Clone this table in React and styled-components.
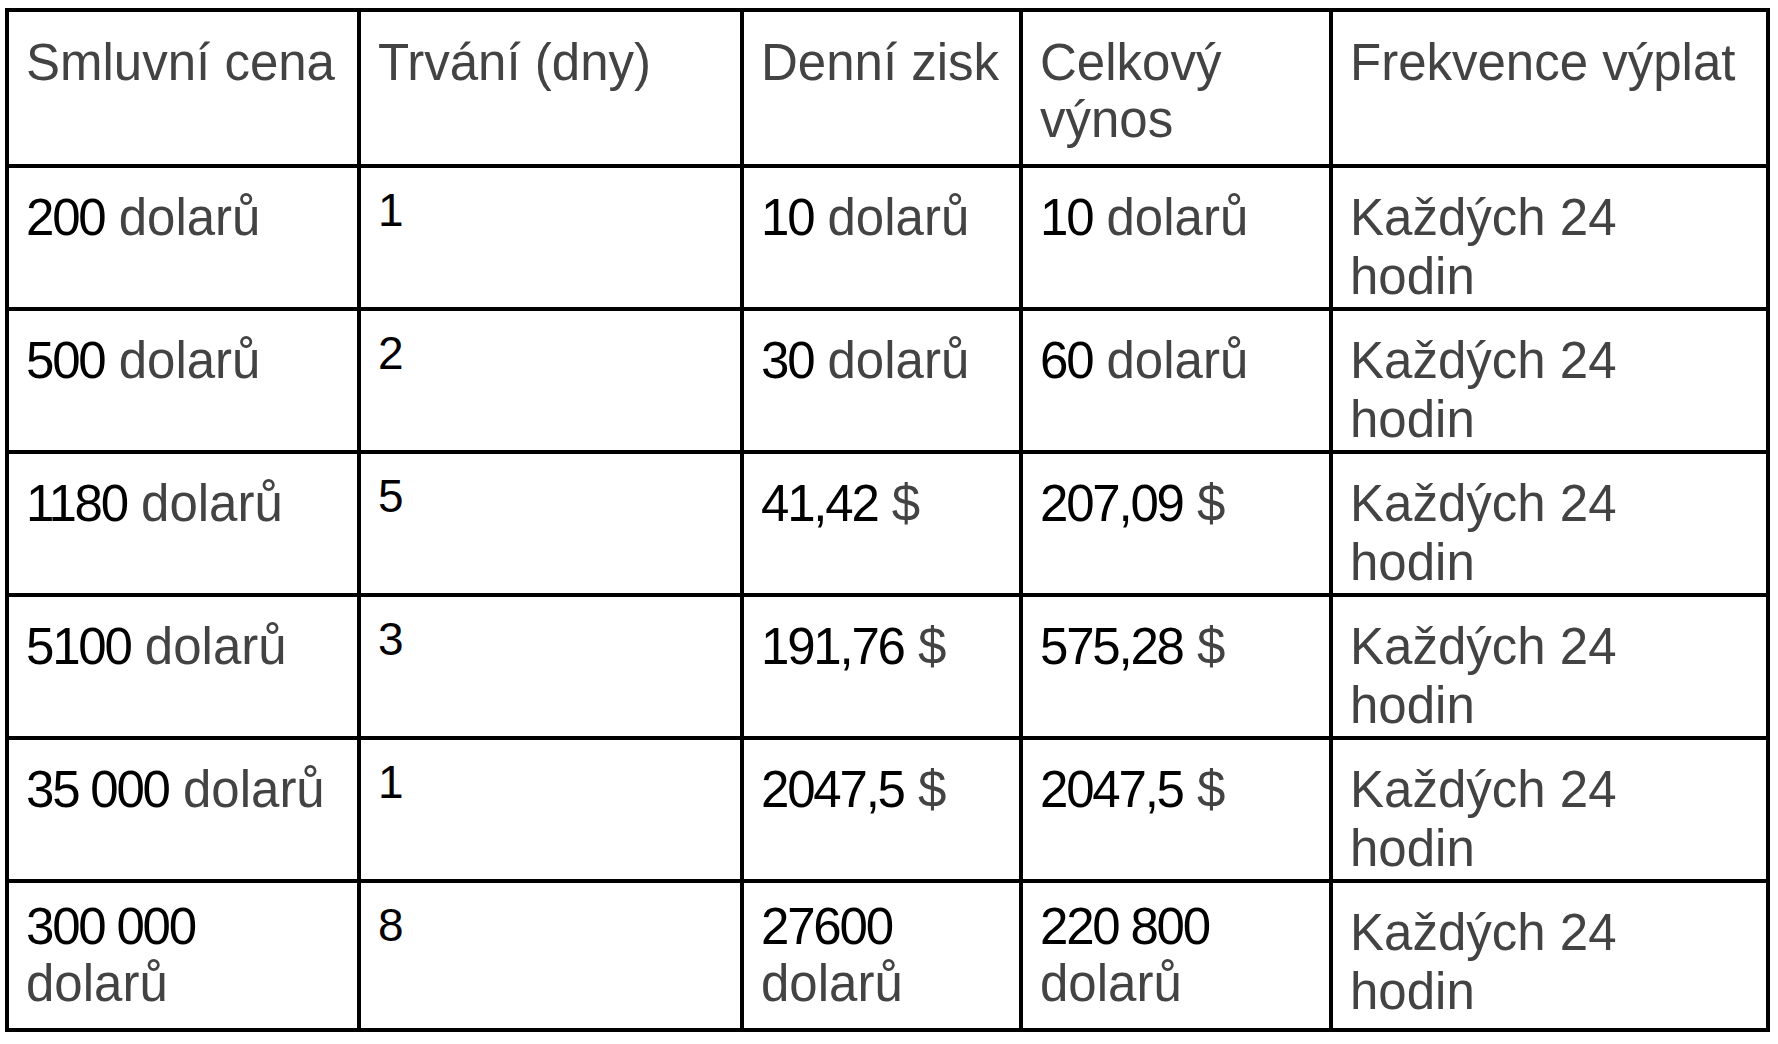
import React from 'react'
import styled, { createGlobalStyle } from 'styled-components'

const GlobalStyle = createGlobalStyle`
  html, body {
    margin: 0;
    padding: 0;
    background: #ffffff;
  }

  body {
    font-family: "Liberation Sans", Arial, sans-serif;
  }
`

const Page = styled.div`
  padding: 8px 0 0 5px;
  width: 1778px;
  height: 1044px;
  box-sizing: border-box;
  overflow: hidden;
`

const PlanTable = styled.table`
  border-collapse: collapse;
  table-layout: fixed;
  width: 1765px;
  border: 4px solid #000;
`

const Column = styled.col`
  width: ${({ $w }) => $w}px;
`

const HeadCell = styled.th`
  border: 4px solid #000;
  padding: 22px 8px 16px 17px;
  vertical-align: top;
  text-align: left;
  font-weight: 400;
  font-size: 51px;
  line-height: 57px;
  color: #434343;

  &:last-child {
    padding-right: 24px;
  }
`

const BodyRow = styled.tr`
  &:last-child > td {
    padding-bottom: 7px;
  }
`

const Cell = styled.td`
  border: 4px solid #000;
  padding: ${({ $tight }) => ($tight ? '15px' : '20px')} 8px 1px 17px;
  vertical-align: top;
  font-size: 51px;
  line-height: ${({ $tight }) => ($tight ? '57px' : '59px')};
  color: #434343;
`

const DaysCell = styled(Cell)`
  padding-top: 16px;
  font-size: 46px;
  line-height: 52px;
  color: #000;
`

const PayoutCell = styled(Cell)`
  padding-right: 24px;
`

const Num = styled.span`
  color: #000;
  letter-spacing: -2.2px;
`

const Amount = ({ value }) => (
  <>
    <Num>{value[0]}</Num>
    {' '}
    {value[1]}
  </>
)

const headers = ['Smluvní cena', 'Trvání (dny)', 'Denní zisk', 'Celkový výnos', 'Frekvence výplat']

const widths = [352, 383, 279, 310, 437]

const plans = [
  { price: ['200', 'dolarů'], days: '1', daily: ['10', 'dolarů'], total: ['10', 'dolarů'] },
  { price: ['500', 'dolarů'], days: '2', daily: ['30', 'dolarů'], total: ['60', 'dolarů'] },
  { price: ['1180', 'dolarů'], days: '5', daily: ['41,42', '$'], total: ['207,09', '$'] },
  { price: ['5100', 'dolarů'], days: '3', daily: ['191,76', '$'], total: ['575,28', '$'] },
  { price: ['35 000', 'dolarů'], days: '1', daily: ['2047,5', '$'], total: ['2047,5', '$'] },
  { price: ['300 000', 'dolarů'], days: '8', daily: ['27600', 'dolarů'], total: ['220 800', 'dolarů'], wrapped: true },
]

const App = () => {
  return (
    <Page>
      <GlobalStyle />
      <PlanTable>
        <colgroup>
          {widths.map((w, i) => (
            <Column key={i} $w={w} />
          ))}
        </colgroup>
        <thead>
          <tr>
            {headers.map((h) => (
              <HeadCell key={h}>{h}</HeadCell>
            ))}
          </tr>
        </thead>
        <tbody>
          {plans.map((plan) => (
            <BodyRow key={plan.price[0]}>
              <Cell $tight={plan.wrapped}><Amount value={plan.price} /></Cell>
              <DaysCell>{plan.days}</DaysCell>
              <Cell $tight={plan.wrapped}><Amount value={plan.daily} /></Cell>
              <Cell $tight={plan.wrapped}><Amount value={plan.total} /></Cell>
              <PayoutCell>Každých 24 hodin</PayoutCell>
            </BodyRow>
          ))}
        </tbody>
      </PlanTable>
    </Page>
  )
}

export default App
